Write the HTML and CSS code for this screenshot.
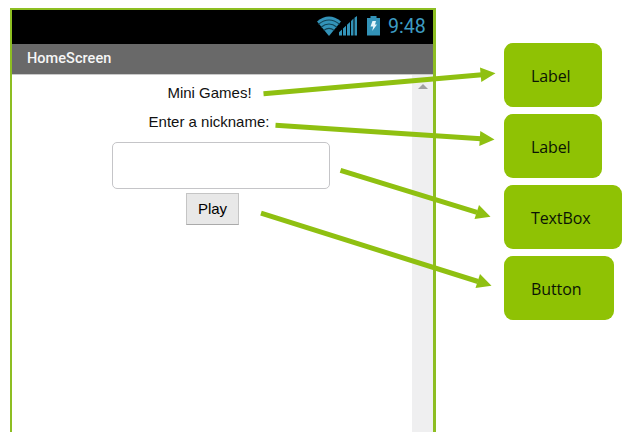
FILE: index.html
```html
<!DOCTYPE html>
<html lang="en">
<head>
<meta charset="utf-8">
<title>HomeScreen</title>
<link rel="stylesheet" href="styles.css">
</head>
<body>
<main class="diagram">
  <section class="phone">
    <div class="status">
      <svg class="network" width="41" height="20" viewBox="0 0 41 20">
        <path class="fill" d="M0 5.500Q12 -4.500 24 5.500L12 20Z"/>
        <path class="arc" d="M1.500 8.200Q12 -.2 22.500 8.200M4 11.300Q12 4.800 20 11.300M6.800 14.500Q12 10.300 17.200 14.500"/>
        <path class="fill" d="M22 19.500V16.200L25 13.400V19.500ZM26 19.500V12.500L29 9.700V19.500ZM30 19.500V8.700L33 5.900V19.500ZM34 19.500V5L36.500 2.600V19.500ZM37.500 19.500V1.700L40 0V19.500Z"/>
      </svg>
      <svg class="battery" width="13" height="20" viewBox="0 0 13 20">
        <path class="fill" d="M3.500 0H9.500V2H13V19.500H0V2H3.500Z"/>
        <path class="bolt" d="M5.500 5H9L8 8.500H10L5.200 15L6.200 10.500H3.500Z"/>
      </svg>
      <span class="time">9:48</span>
    </div>
    <header class="title">HomeScreen</header>
    <div class="screen">
      <div class="content">
        <div class="text">Mini Games!</div>
        <label class="text prompt" for="nick">Enter a nickname:</label>
        <input class="nick" id="nick" type="text">
        <button class="play">Play</button>
      </div>
      <div class="scroll"><span class="up"></span></div>
    </div>
  </section>
  <aside class="callouts">
    <div class="callout">Label</div>
    <div class="callout">Label</div>
    <div class="callout textbox">TextBox</div>
    <div class="callout button">Button</div>
  </aside>
  <svg class="arrows" width="634" height="432" viewBox="0 0 634 432">
    <path class="line" d="M263.500 93.700L482 74.700M275.500 125.300L481 138.700M340.500 170.300L477 212.300M261 213.200L478 281.500"/>
    <path class="head" d="M480 67.500L495.500 73.200L481.300 82ZM480.300 131L494.500 139.500L479.300 146ZM479 205L490.500 216.700L474.500 219ZM480 274L491.500 285.700L475.500 288Z"/>
  </svg>
</main>
</body>
</html>
```
FILE: styles.css
```css
* { box-sizing: border-box; }
body { margin: 0; background: #fff; overflow: hidden; }
.diagram { position: relative; display: flex; width: 634px; height: 432px; padding: 8px 0 0 10px; }
.phone {
  display: flex; flex-direction: column;
  width: 426px; height: 424px;
  border: solid #8dbe22; border-width: 2px 3px 0 2px;
}
.status {
  display: flex; align-items: flex-start;
  height: 34px; padding: 6px 8px 0 0;
  justify-content: flex-end; background: #000;
}
.battery { margin: 0 8px 0 9px; }
.fill { fill: #3393b8; }
.arc { fill: none; stroke: #124253; stroke-width: 1.1; }
.bolt { fill: #e4f5fb; }
.time { width: 37px; color: #3d9cc2; font: 19.6px/22px Roboto, sans-serif; white-space: nowrap; }
.title {
  height: 31px; padding-left: 15px;
  border-bottom: 1px solid #c9c9c9;
  background: #696969; color: #f6f6f6;
  font: 500 14.5px/29px Roboto, sans-serif; letter-spacing: .05px;
}
.screen { display: flex; flex: 1; }
.content { display: flex; flex-direction: column; align-items: center; width: 400px; padding: 8px 5px 0 0; }
.text { color: #111; font: 15px/20px "Liberation Sans", Arial, sans-serif; }
.prompt { margin: 9px 1px 0 0; }
.nick { width: 218px; height: 47px; margin: 10px 0 4px 23px; border: 1px solid #c5c5c8; border-radius: 5px; background: #fff; }
.play {
  width: 53px; height: 32px; margin-left: 6px; padding: 0;
  border: 1px solid #c5c5c5; border-bottom-color: #aaa; background: #e8e8e8;
  color: #000; font: 15px/30px "Liberation Sans", Arial, sans-serif;
}
.scroll { display: flex; justify-content: center; width: 21px; padding-top: 9px; background: #efeff0; }
.up { width: 0; height: 0; border: solid transparent; border-width: 0 5px 5px; border-bottom-color: #a0a0a0; }
.callouts { display: flex; flex-direction: column; gap: 7px; margin-left: 68px; padding-top: 35px; }
.callout {
  width: 98px; height: 64px; padding: 1px 0 0 27px;
  border-radius: 9px; background: #8fc204; color: #0b1404;
  font: 16px/64px "Open Sans", sans-serif; letter-spacing: -.1px;
}
.textbox { width: 118px; }
.button { width: 110px; }
.arrows { position: absolute; left: 0; top: 0; }
.line { fill: none; stroke: #8fc011; stroke-width: 5; }
.head { fill: #8fc011; }
```
